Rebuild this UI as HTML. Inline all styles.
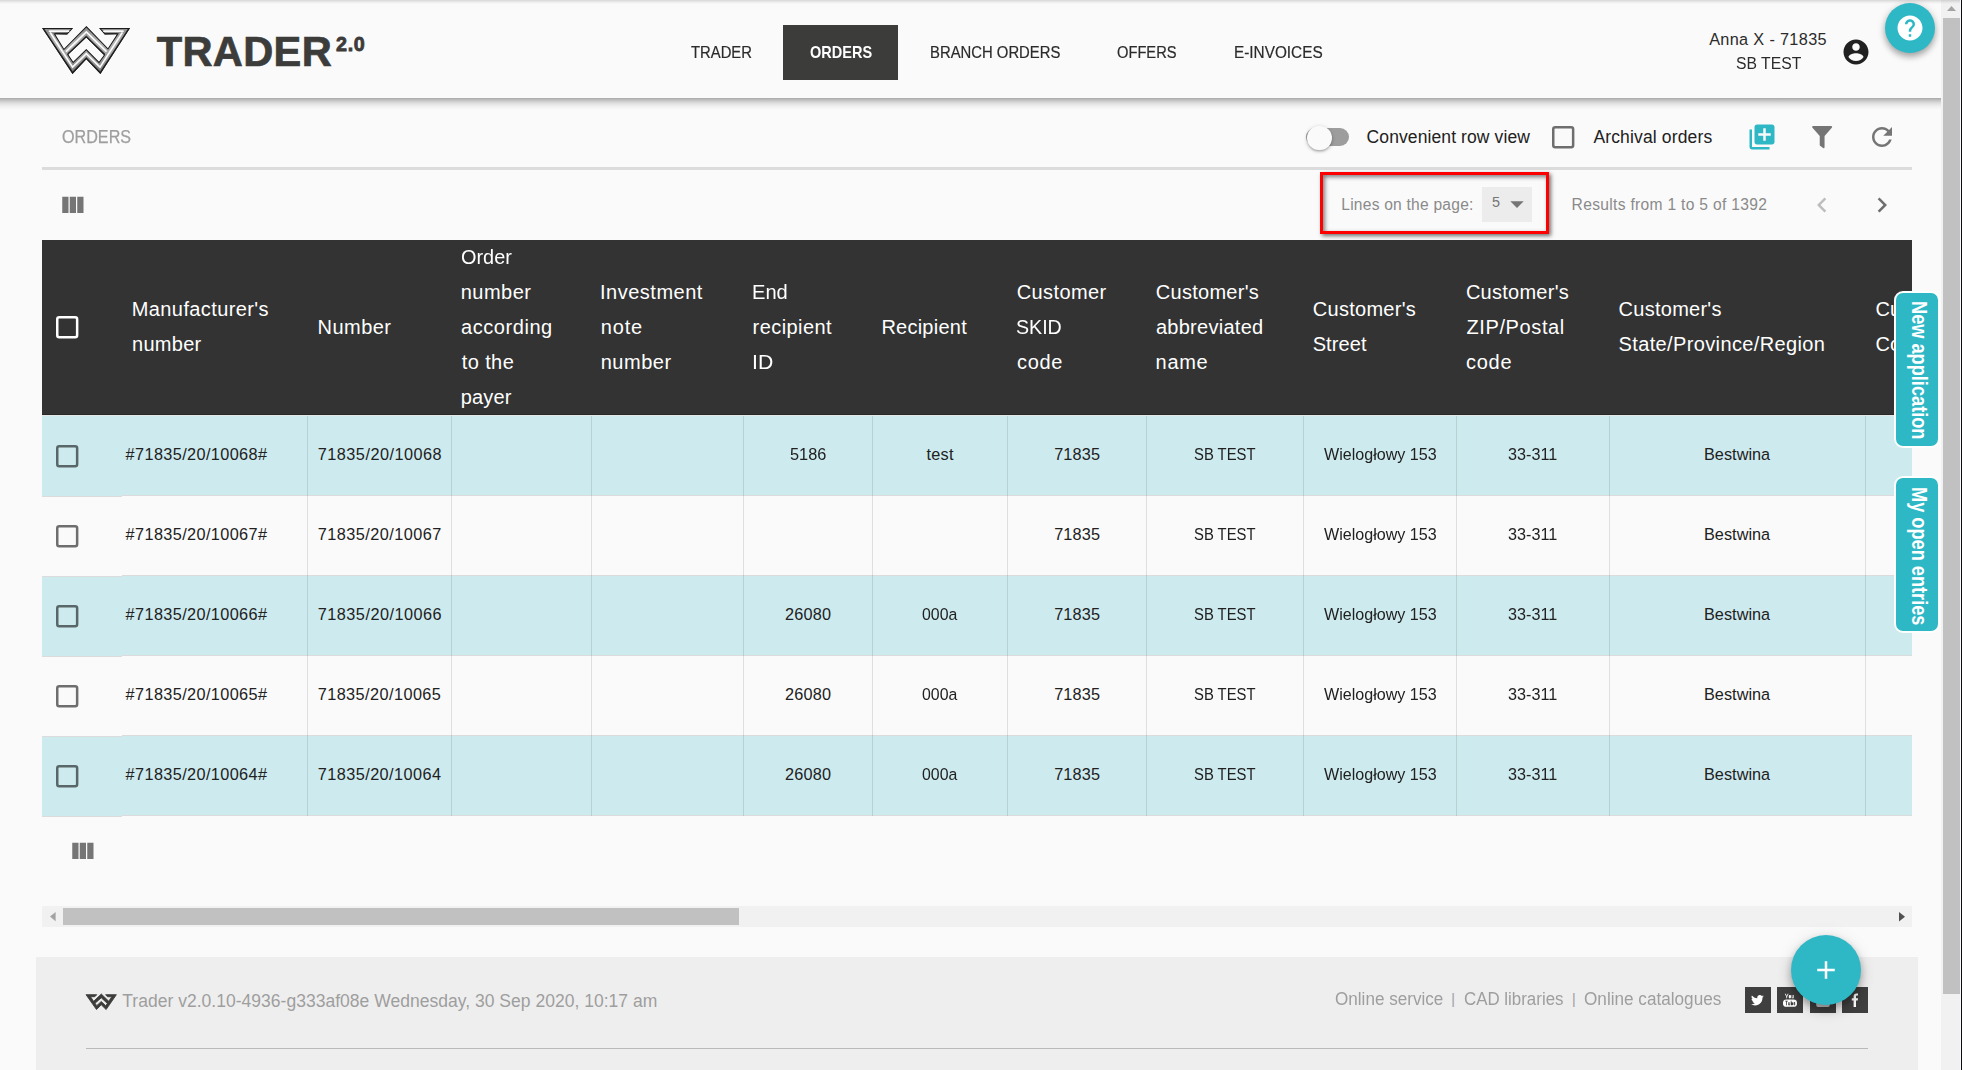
<!DOCTYPE html>
<html lang="en">
<head>
<meta charset="utf-8">
<title>Trader 2.0 - Orders</title>
<style>
html,body{margin:0;padding:0}
body{width:1962px;height:1070px;overflow:hidden;position:relative;background:#fafafa;font-family:"Liberation Sans",sans-serif;}
.a{position:absolute}
.t{position:absolute;white-space:nowrap;transform-origin:0 50%;font-family:"Liberation Sans",sans-serif}
svg{position:absolute;overflow:visible}
#hdr{left:0;top:0;width:1941px;height:98px;background:#fafafa}
#hsh{left:0;top:98px;width:1941px;height:12px;background:linear-gradient(rgba(0,0,0,.33),rgba(0,0,0,.23) 17%,rgba(0,0,0,.115) 42%,rgba(0,0,0,.04) 70%,rgba(0,0,0,0))}
#topshade{left:0;top:0;width:1960px;height:4px;background:linear-gradient(rgba(0,0,0,.14),rgba(0,0,0,.05) 55%,rgba(0,0,0,0))}
#navact{left:783px;top:25px;width:115px;height:55px;background:#3c3c3b}
.fab{border-radius:50%;background:#2eb8c6}
#help{left:1885px;top:3px;width:50px;height:50px;box-shadow:0 4px 6px rgba(0,0,0,.28),0 1px 10px rgba(0,0,0,.14)}
#add{left:1791px;top:935px;width:70px;height:70px;box-shadow:0 4px 7px rgba(0,0,0,.24),0 7px 14px rgba(0,0,0,.13),0 1px 18px rgba(0,0,0,.08)}
#vtrack{left:1941px;top:0;width:19px;height:1070px;background:#f1f1f1}
#vthumb{left:1943px;top:18px;width:17px;height:976px;background:#c1c1c1}
#vedge{left:1960.5px;top:0;width:1.5px;height:1070px;background:#0b0b14}
#divider{left:42px;top:167.3px;width:1870px;height:2.7px;background:#dcdcdc}
#redbox{left:1320px;top:172px;width:223px;height:56px;border:3px solid #ff0000;box-shadow:2px 2px 4px rgba(0,0,0,.55),inset 2px 2px 4px rgba(0,0,0,.5)}
#sel{left:1482px;top:187.2px;width:50px;height:34.4px;background:#ececec}
#track{left:1306px;top:128.2px;width:42.7px;height:17.6px;border-radius:9px;background:#9d9d9d}
#thumb{left:1307.3px;top:125.5px;width:24.3px;height:24.3px;border-radius:50%;background:#fafafa;box-shadow:0 1.5px 2px rgba(0,0,0,.2),0 1px 4px rgba(0,0,0,.2)}
.cb{width:17.6px;height:17.6px;border:2.4px solid #6b6b6b;border-radius:2.6px}
#thead{left:42px;top:240px;width:1870px;height:174.8px;background:#333333;box-sizing:border-box;border-bottom:1px solid #292929}
.row{left:42px;width:1870px;height:80.25px;box-sizing:border-box;border-bottom:1px solid #dcdcdc}
.srow{left:42px;width:79.9px;height:80.25px;box-sizing:border-box;border-bottom:1px solid #dcdcdc}
.teal{background:#cdeaee}
.white{background:#fafafa}
.vl{top:416px;width:1px;height:400px;background:rgba(0,0,0,.105)}
#htrack{left:42px;top:906px;width:1870px;height:21px;background:#f1f1f1}
#hthumb{left:63px;top:908px;width:676px;height:17px;background:#c1c1c1}
#footer{left:36px;top:957px;width:1882px;height:113px;background:#eeeeee}
#fhr{left:86px;top:1048px;width:1782px;height:1px;background:#b9b9b9}
.soc{top:987px;width:26px;height:26px;background:#3f3f3f}
.tab{left:1893.9px;width:42.3px;height:153.1px;background:#2eb8c6;border:2px solid #fdfefe;border-radius:9px}
.tabt{position:absolute;white-space:nowrap;color:#fff;font-weight:700;font-size:21.5px;line-height:21.5px;transform-origin:0 0;transform:rotate(90deg) scaleX(.846)}
#clip{left:42px;top:240px;width:1870px;height:580px;overflow:hidden}
</style>
</head>
<body>
<div class="a" id="hdr"></div>
<div class="a" id="hsh"></div>
<div class="a" id="navact"></div>

<!-- logo -->
<svg width="140" height="80" viewBox="0 0 140 80" style="left:0;top:0">
<defs>
<linearGradient id="mg" x1="0" y1="0" x2="0" y2="1">
<stop offset="0" stop-color="#868686"/><stop offset=".35" stop-color="#b4b4b4"/><stop offset=".7" stop-color="#9a9a9a"/><stop offset="1" stop-color="#787878"/>
</linearGradient>
<filter id="bl" x="-10%" y="-10%" width="120%" height="120%"><feGaussianBlur stdDeviation=".55"/></filter>
<clipPath id="wclip"><path d="M42.1 28.1H73.2L67.3 34.5 55.2 34.2 64 48.7 86.4 26.1 107.9 48.2 117 34.3 104.6 34.5 99 28.1H130.1L100.4 73.9 86.3 59.2 72.5 73.9ZM86.3 37.6L68.3 54.6 73.2 61.8 86.3 49 99 61.8 104 54.9Z" clip-rule="evenodd"/></clipPath>
</defs>
<g clip-path="url(#wclip)">
<path fill-rule="evenodd" fill="url(#mg)" stroke="#1c1c1c" stroke-width="2.0" stroke-linejoin="miter" d="M42.1 28.1H73.2L67.3 34.5 55.2 34.2 64 48.7 86.4 26.1 107.9 48.2 117 34.3 104.6 34.5 99 28.1H130.1L100.4 73.9 86.3 59.2 72.5 73.9ZM86.3 37.6L68.3 54.6 73.2 61.8 86.3 49 99 61.8 104 54.9Z"/>
<g fill="none" stroke="#1e1e1e" stroke-width="3" filter="url(#bl)" opacity=".8">
<path d="M42.1 28.1L72.5 73.9 86.3 59.2 100.4 73.9 130.1 28.1"/>
<path d="M68.3 54.6L86.3 37.6 104 54.9"/>
<path d="M55.2 34.2H67.3M104.6 34.5H117"/>
</g>
<g fill="none" stroke="#ffffff" stroke-width="1.7" stroke-linecap="round" filter="url(#bl)" opacity=".95">
<path d="M49.5 31.2H68.5"/>
<path d="M104 31.2H123"/>
<path d="M50.5 33L72.6 67.2 86.3 53.6 100 67.2 122 33"/>
<path d="M66.5 51.2L86.35 32 106 51.2"/>
</g>
</g>
</svg>

<!-- account icon -->
<svg width="30" height="30" viewBox="0 0 24 24" style="left:1841px;top:37px"><path fill="#212121" d="M12 2C6.48 2 2 6.48 2 12s4.48 10 10 10 10-4.48 10-10S17.52 2 12 2zm0 3c1.66 0 3 1.34 3 3s-1.34 3-3 3-3-1.34-3-3 1.34-3 3-3zm0 14.2c-2.5 0-4.71-1.28-6-3.22.03-1.99 4-3.08 6-3.08 1.99 0 5.97 1.09 6 3.08-1.29 1.94-3.5 3.22-6 3.22z"/></svg>

<!-- toolbar -->
<div class="a" id="track"></div>
<div class="a" id="thumb"></div>
<svg width="22.4" height="22.4" viewBox="0 0 22.4 22.4" style="left:1552px;top:125.8px"><rect x="1.25" y="1.25" width="19.9" height="19.9" rx="2" fill="none" stroke="rgba(0,0,0,.56)" stroke-width="2.5"/></svg>
<svg width="30" height="30" viewBox="0 0 24 24" style="left:1747px;top:122px"><path fill="#2eb8c6" d="M4 6H2v14c0 1.1.9 2 2 2h14v-2H4V6zm16-4H8c-1.1 0-2 .9-2 2v12c0 1.1.9 2 2 2h12c1.1 0 2-.9 2-2V4c0-1.1-.9-2-2-2zm-1 9h-4v4h-2v-4H9V9h4V5h2v4h4v2z"/></svg>
<svg width="20.3" height="22.6" viewBox="0 0 21 23" preserveAspectRatio="none" style="left:1811.9px;top:125.7px"><path fill="#757575" d="M1.2 0H19.8C20.8 0 21.2 1 20.5 1.8L13 10.2V21.6C13 22.5 12.2 22.9 11.5 22.4L8.4 20.2C8.1 20 8 19.7 8 19.3V10.2L.5 1.8C-.2 1 .2 0 1.2 0Z"/></svg>
<svg width="30" height="30" viewBox="0 0 24 24" style="left:1867px;top:122px"><path fill="#757575" d="M17.65 6.35C16.2 4.9 14.21 4 12 4c-4.42 0-7.99 3.58-7.99 8s3.57 8 7.99 8c3.73 0 6.84-2.55 7.73-6h-2.08c-.82 2.33-3.04 4-5.65 4-3.31 0-6-2.69-6-6s2.69-6 6-6c1.66 0 3.14.69 4.22 1.78L13 11h7V4l-2.35 2.35z"/></svg>
<div class="a" id="divider"></div>

<!-- pager -->
<svg width="25" height="19" viewBox="3 4.4 20 15.2" style="left:60.7px;top:195.9px"><path fill="#757575" d="M10 18h5V5h-5v13zm-6 0h5V5H4v13zM16 5v13h5V5h-5z"/></svg>
<div class="a" id="sel"></div>
<svg width="32" height="32" viewBox="0 0 24 24" style="left:1501px;top:188px"><path fill="#757575" d="M7 10l5 5 5-5z"/></svg>
<div class="a" id="redbox"></div>
<svg width="30" height="30" viewBox="0 0 24 24" style="left:1807px;top:189.9px"><path fill="#bdbdbd" d="M15.41 7.41L14 6l-6 6 6 6 1.41-1.41L10.83 12z"/></svg>
<svg width="30" height="30" viewBox="0 0 24 24" style="left:1867px;top:189.9px"><path fill="#6e6e6e" d="M10 6L8.59 7.41 13.17 12l-4.58 4.59L10 18l6-6z"/></svg>

<!-- table -->
<div class="a" id="thead"></div>
<div class="a row teal" style="top:416px;height:80px"></div>
<div class="a row white" style="top:496px;height:80px"></div>
<div class="a row teal" style="top:576px;height:80px"></div>
<div class="a row white" style="top:656px;height:80px"></div>
<div class="a row teal" style="top:736px;height:80px"></div>
<div class="a srow teal" style="top:416px;height:81px"></div>
<div class="a srow white" style="top:497px;height:80px"></div>
<div class="a srow teal" style="top:577px;height:80px"></div>
<div class="a srow white" style="top:657px;height:80px"></div>
<div class="a srow teal" style="top:737px;height:80px"></div>
<div class="a" style="left:42px;top:415px;width:1870px;height:1px;background:#e4e8e8"></div>
<div class="a vl" style="left:307px"></div>
<div class="a vl" style="left:451px"></div>
<div class="a vl" style="left:591px"></div>
<div class="a vl" style="left:743px"></div>
<div class="a vl" style="left:872px"></div>
<div class="a vl" style="left:1007px"></div>
<div class="a vl" style="left:1146px"></div>
<div class="a vl" style="left:1303px"></div>
<div class="a vl" style="left:1456px"></div>
<div class="a vl" style="left:1609px"></div>
<div class="a vl" style="left:1865px"></div>
<svg width="22.4" height="22.4" viewBox="0 0 22.4 22.4" style="left:55.8px;top:315.8px"><rect x="1.25" y="1.25" width="19.9" height="19.9" rx="2" fill="none" stroke="#fff" stroke-width="2.5"/></svg>
<svg width="22.4" height="22.4" viewBox="0 0 22.4 22.4" style="left:55.8px;top:444.7px"><rect x="1.25" y="1.25" width="19.9" height="19.9" rx="2" fill="none" stroke="rgba(0,0,0,.56)" stroke-width="2.5"/></svg>
<svg width="22.4" height="22.4" viewBox="0 0 22.4 22.4" style="left:55.8px;top:524.7px"><rect x="1.25" y="1.25" width="19.9" height="19.9" rx="2" fill="none" stroke="rgba(0,0,0,.56)" stroke-width="2.5"/></svg>
<svg width="22.4" height="22.4" viewBox="0 0 22.4 22.4" style="left:55.8px;top:604.7px"><rect x="1.25" y="1.25" width="19.9" height="19.9" rx="2" fill="none" stroke="rgba(0,0,0,.56)" stroke-width="2.5"/></svg>
<svg width="22.4" height="22.4" viewBox="0 0 22.4 22.4" style="left:55.8px;top:684.7px"><rect x="1.25" y="1.25" width="19.9" height="19.9" rx="2" fill="none" stroke="rgba(0,0,0,.56)" stroke-width="2.5"/></svg>
<svg width="22.4" height="22.4" viewBox="0 0 22.4 22.4" style="left:55.8px;top:764.7px"><rect x="1.25" y="1.25" width="19.9" height="19.9" rx="2" fill="none" stroke="rgba(0,0,0,.56)" stroke-width="2.5"/></svg>

<svg width="25" height="19" viewBox="3 4.4 20 15.2" style="left:70.6px;top:841.8px"><path fill="#757575" d="M10 18h5V5h-5v13zm-6 0h5V5H4v13zM16 5v13h5V5h-5z"/></svg>

<!-- horizontal scrollbar -->
<div class="a" id="htrack"></div>
<div class="a" id="hthumb"></div>
<svg width="5.6" height="9.2" viewBox="0 0 6 10" preserveAspectRatio="none" style="left:49.8px;top:912px"><path fill="#a3a3a3" d="M6 0V10L0 5Z"/></svg>
<svg width="6" height="9.6" viewBox="0 0 6 10" preserveAspectRatio="none" style="left:1899.1px;top:911.5px"><path fill="#505050" d="M0 0V10L6 5Z"/></svg>

<!-- footer -->
<div class="a" id="footer"></div>
<div class="a" id="fhr"></div>
<svg width="30.4" height="15.6" viewBox="42 26 88.2 48" preserveAspectRatio="none" style="left:86.4px;top:994.4px"><path fill-rule="evenodd" fill="#3c3c3b" stroke="#3c3c3b" stroke-width="2.6" stroke-linejoin="miter" d="M42.1 28.1H73.2L67.3 34.5 55.2 34.2 64 48.7 86.4 26.1 107.9 48.2 117 34.3 104.6 34.5 99 28.1H130.1L100.4 73.9 86.3 59.2 72.5 73.9ZM86.3 37.6L68.3 54.6 73.2 61.8 86.3 49 99 61.8 104 54.9Z"/></svg>
<div class="a soc" style="left:1745px"></div>
<div class="a soc" style="left:1777px"></div>
<div class="a soc" style="left:1810px"></div>
<div class="a soc" style="left:1842px"></div>
<svg width="12.8" height="10.7" viewBox="0 0 24 20" style="left:1751.3px;top:994.8px"><path fill="#fff" d="M24 2.4c-.9.4-1.8.7-2.8.8 1-.6 1.800-1.600 2.200-2.700-1 .6-2 1-3.100 1.200C19.400.7 18.100 0 16.600 0c-2.700 0-4.900 2.200-4.900 4.900 0 .4 0 .8.100 1.100C7.700 5.800 4.100 3.900 1.700.9c-.4.700-.7 1.600-.7 2.500 0 1.700.9 3.200 2.200 4.100-.8 0-1.600-.2-2.200-.6v.1c0 2.400 1.700 4.400 3.900 4.800-.4.100-.8.200-1.300.2-.3 0-.6 0-.9-.1.600 2 2.400 3.400 4.600 3.400-1.700 1.300-3.800 2.100-6.100 2.100-.4 0-.8 0-1.200-.1 2.200 1.400 4.800 2.200 7.500 2.200 9.100 0 14-7.500 14-14v-.6c1-.7 1.800-1.600 2.500-2.500z"/></svg>
<svg width="26" height="26" viewBox="0 0 26 26" style="left:1777px;top:987px"><rect x="6" y="12.400" width="14" height="7.400" rx="3.400" fill="#fff"/><path fill="#fff" d="M8.700 6.800l1 2.200 1-2.200h.9l-1.500 3v1.500h-.8V9.800l-1.500-3zM12.900 8c.7 0 1.100.4 1.100 1.100v1.200c0 .7-.4 1.100-1.100 1.100s-1.100-.4-1.100-1.100V9.100c0-.7.4-1.100 1.100-1.100zm1.800 0h.7v2.600h.6V8h.7v3.300h-2z"/><path fill="#3c3c3b" d="M8.200 13.700h2.600v.8h-.9v3.800h-.8v-3.800h-.9zM11.200 15.200h.7v2.300h.5v-2.300h.7v3.100h-1.900zM13.800 13.700h.7v1.500h.8c.4 0 .7.300.7.700v1.700c0 .4-.3.700-.7.700h-1.500zM16.600 15.900c0-.5.300-.8.800-.8s.8.300.8.800v.9h-.9v.5h.9v.4c0 .4-.3.600-.8.600s-.8-.3-.8-.8z"/></svg>
<svg width="26" height="26" viewBox="0 0 26 26" style="left:1810px;top:987px"><rect x="6.200" y="7" width="13.600" height="13" rx="2" fill="#c9c9c9"/></svg>
<svg width="26" height="26" viewBox="0 0 26 26" style="left:1842px;top:987px"><path fill="#fff" d="M11.600 20V13.600H9.800V11.300h1.800V9.600c0-1.900 1.100-3.100 3-3.100.8 0 1.400.1 1.400.1v2h-1c-.8 0-1 .4-1 1v1.700h2l-.3 2.300h-1.700V20z"/></svg>

<!-- FABs -->
<div class="a fab" id="add"></div>
<svg width="30" height="30" viewBox="0 0 24 24" style="left:1811px;top:955px"><path fill="#fff" d="M19 13h-6v6h-2v-6H5v-2h6V5h2v6h6v2z"/></svg>
<div class="a fab" id="help"></div>
<svg width="30" height="30" viewBox="0 0 24 24" style="left:1895px;top:13px"><path fill="#fff" d="M12 2C6.48 2 2 6.48 2 12s4.48 10 10 10 10-4.480 10-10S17.520 2 12 2zm1 17h-2v-2h2v2zm2.070-7.750l-.9.920C13.450 12.900 13 13.500 13 15h-2v-.5c0-1.100.450-2.100 1.170-2.830l1.240-1.260c.370-.360.590-.860.590-1.410 0-1.100-.9-2-2-2s-2 .9-2 2H8c0-2.210 1.790-4 4-4s4 1.790 4 4c0 .880-.360 1.680-.930 2.250z"/></svg>

<!-- texts -->
<header>
<span class="t" id="t0" style="left:156.7px;top:31.4px;font-size:41.60px;line-height:41.60px;color:#3c3c3b;font-weight:700;-webkit-text-stroke:.7px #3c3c3b;letter-spacing:.35px;">TRADER</span>
<span class="t" id="t1" style="left:336.1px;top:34.7px;font-size:19.70px;line-height:19.70px;color:#3c3c3b;font-weight:700;-webkit-text-stroke:.8px #3c3c3b;letter-spacing:.6px;">2.0</span>
<span class="t" id="t2" style="left:691.2px;top:44.2px;font-size:16.25px;line-height:16.25px;color:#2b2b2b;transform:scaleX(0.912);-webkit-text-stroke:.2px #2b2b2b;">TRADER</span>
<span class="t" id="t3" style="left:809.6px;top:44.2px;font-size:16.25px;line-height:16.25px;color:#ffffff;font-weight:700;transform:scaleX(0.893);">ORDERS</span>
<span class="t" id="t4" style="left:929.5px;top:44.2px;font-size:16.25px;line-height:16.25px;color:#2b2b2b;transform:scaleX(0.914);-webkit-text-stroke:.2px #2b2b2b;">BRANCH ORDERS</span>
<span class="t" id="t5" style="left:1117.1px;top:44.2px;font-size:16.25px;line-height:16.25px;color:#2b2b2b;transform:scaleX(0.903);-webkit-text-stroke:.2px #2b2b2b;">OFFERS</span>
<span class="t" id="t6" style="left:1233.8px;top:44.2px;font-size:16.25px;line-height:16.25px;color:#2b2b2b;transform:scaleX(0.944);-webkit-text-stroke:.2px #2b2b2b;">E-INVOICES</span>
<span class="t" id="t7" style="left:1709.2px;top:31.0px;font-size:16.25px;line-height:16.25px;color:#2b2b2b;letter-spacing:0.34px;">Anna X - 71835</span>
<span class="t" id="t8" style="left:1736.2px;top:55.1px;font-size:16.25px;line-height:16.25px;color:#2b2b2b;transform:scaleX(0.968);">SB TEST</span>
</header>
<section aria-label="Orders toolbar">
<span class="t" id="t9" style="left:62.4px;top:127.5px;font-size:18.30px;line-height:18.30px;color:#9e9e9e;transform:scaleX(0.883);-webkit-text-stroke:.25px #9e9e9e;">ORDERS</span>
<span class="t" id="t10" style="left:1366.6px;top:128.5px;font-size:17.50px;line-height:17.50px;color:#212121;letter-spacing:0.10px;">Convenient row view</span>
<span class="t" id="t11" style="left:1593.4px;top:128.5px;font-size:17.50px;line-height:17.50px;color:#212121;letter-spacing:0.15px;">Archival orders</span>
<span class="t" id="t12" style="left:1341.3px;top:196.6px;font-size:15.60px;line-height:15.60px;color:#8a8a8a;letter-spacing:0.22px;">Lines on the page:</span>
<span class="t" id="t13" style="left:1491.9px;top:195.4px;font-size:14.40px;line-height:14.40px;color:#757575;">5</span>
<span class="t" id="t14" style="left:1571.6px;top:196.6px;font-size:15.60px;line-height:15.60px;color:#8a8a8a;letter-spacing:0.31px;">Results from 1 to 5 of 1392</span>
</section>
<div role="table" aria-label="Orders">
<div role="row">
<span class="t" id="t15" style="left:131.8px;top:298.9px;font-size:20.00px;line-height:20.00px;color:#ffffff;letter-spacing:0.39px;">Manufacturer's</span>
<span class="t" id="t16" style="left:132.0px;top:333.9px;font-size:20.00px;line-height:20.00px;color:#ffffff;letter-spacing:0.28px;">number</span>
<span class="t" id="t17" style="left:317.5px;top:317.2px;font-size:20.00px;line-height:20.00px;color:#ffffff;letter-spacing:0.48px;">Number</span>
<span class="t" id="t18" style="left:460.5px;top:247.2px;font-size:20.00px;line-height:20.00px;color:#ffffff;transform:scaleX(0.995);">Order</span>
<span class="t" id="t19" style="left:460.7px;top:282.2px;font-size:20.00px;line-height:20.00px;color:#ffffff;letter-spacing:0.48px;">number</span>
<span class="t" id="t20" style="left:461.0px;top:317.2px;font-size:20.00px;line-height:20.00px;color:#ffffff;letter-spacing:0.56px;">according</span>
<span class="t" id="t21" style="left:461.7px;top:352.2px;font-size:20.00px;line-height:20.00px;color:#ffffff;letter-spacing:0.41px;">to the</span>
<span class="t" id="t22" style="left:460.7px;top:387.2px;font-size:20.00px;line-height:20.00px;color:#ffffff;letter-spacing:0.16px;">payer</span>
<span class="t" id="t23" style="left:600.0px;top:282.2px;font-size:20.00px;line-height:20.00px;color:#ffffff;letter-spacing:0.51px;">Investment</span>
<span class="t" id="t24" style="left:600.7px;top:317.2px;font-size:20.00px;line-height:20.00px;color:#ffffff;letter-spacing:0.87px;">note</span>
<span class="t" id="t25" style="left:600.7px;top:352.2px;font-size:20.00px;line-height:20.00px;color:#ffffff;letter-spacing:0.52px;">number</span>
<span class="t" id="t26" style="left:751.8px;top:282.2px;font-size:20.00px;line-height:20.00px;color:#ffffff;transform:scaleX(1.006);">End</span>
<span class="t" id="t27" style="left:752.6px;top:317.2px;font-size:20.00px;line-height:20.00px;color:#ffffff;letter-spacing:0.43px;">recipient</span>
<span class="t" id="t28" style="left:751.5px;top:352.2px;font-size:20.00px;line-height:20.00px;color:#ffffff;transform:scaleX(1.062);">ID</span>
<span class="t" id="t29" style="left:881.4px;top:317.2px;font-size:20.00px;line-height:20.00px;color:#ffffff;letter-spacing:0.24px;">Recipient</span>
<span class="t" id="t30" style="left:1016.8px;top:282.2px;font-size:20.00px;line-height:20.00px;color:#ffffff;letter-spacing:0.37px;">Customer</span>
<span class="t" id="t31" style="left:1016.2px;top:317.2px;font-size:20.00px;line-height:20.00px;color:#ffffff;transform:scaleX(0.981);">SKID</span>
<span class="t" id="t32" style="left:1017.0px;top:352.2px;font-size:20.00px;line-height:20.00px;color:#ffffff;letter-spacing:0.64px;">code</span>
<span class="t" id="t33" style="left:1155.8px;top:282.2px;font-size:20.00px;line-height:20.00px;color:#ffffff;letter-spacing:0.27px;">Customer's</span>
<span class="t" id="t34" style="left:1155.9px;top:317.2px;font-size:20.00px;line-height:20.00px;color:#ffffff;letter-spacing:0.28px;">abbreviated</span>
<span class="t" id="t35" style="left:1155.6px;top:352.2px;font-size:20.00px;line-height:20.00px;color:#ffffff;letter-spacing:0.66px;">name</span>
<span class="t" id="t36" style="left:1312.8px;top:298.9px;font-size:20.00px;line-height:20.00px;color:#ffffff;letter-spacing:0.27px;">Customer's</span>
<span class="t" id="t37" style="left:1312.7px;top:333.9px;font-size:20.00px;line-height:20.00px;color:#ffffff;letter-spacing:0.08px;">Street</span>
<span class="t" id="t38" style="left:1465.9px;top:282.2px;font-size:20.00px;line-height:20.00px;color:#ffffff;letter-spacing:0.26px;">Customer's</span>
<span class="t" id="t39" style="left:1466.4px;top:317.2px;font-size:20.00px;line-height:20.00px;color:#ffffff;letter-spacing:0.63px;">ZIP/Postal</span>
<span class="t" id="t40" style="left:1466.0px;top:352.2px;font-size:20.00px;line-height:20.00px;color:#ffffff;letter-spacing:0.75px;">code</span>
<span class="t" id="t41" style="left:1618.6px;top:298.9px;font-size:20.00px;line-height:20.00px;color:#ffffff;letter-spacing:0.26px;">Customer's</span>
<span class="t" id="t42" style="left:1618.5px;top:333.9px;font-size:20.00px;line-height:20.00px;color:#ffffff;letter-spacing:0.37px;">State/Province/Region</span>
<span class="t" id="t43" style="left:1875.6px;top:298.9px;font-size:20.00px;line-height:20.00px;color:#ffffff;clip-path:inset(0 calc(100% - 37px) 0 0);">Customer's</span>
<span class="t" id="t44" style="left:1875.6px;top:333.9px;font-size:20.00px;line-height:20.00px;color:#ffffff;clip-path:inset(0 calc(100% - 37px) 0 0);">Country</span>
</div>
<div role="row">
<span class="t" id="t45" style="left:125.6px;top:445.7px;font-size:16.25px;line-height:16.25px;color:#212121;letter-spacing:0.39px;">#71835/20/10068#</span>
<span class="t" id="t46" style="left:317.8px;top:446.0px;font-size:16.25px;line-height:16.25px;color:#212121;letter-spacing:0.48px;">71835/20/10068</span>
<span class="t" id="t47" style="left:790.1px;top:446.0px;font-size:16.25px;line-height:16.25px;color:#212121;transform:scaleX(1.005);">5186</span>
<span class="t" id="t48" style="left:926.4px;top:446.0px;font-size:16.25px;line-height:16.25px;color:#212121;letter-spacing:0.30px;">test</span>
<span class="t" id="t49" style="left:1054.2px;top:446.0px;font-size:16.25px;line-height:16.25px;color:#212121;letter-spacing:0.15px;">71835</span>
<span class="t" id="t50" style="left:1193.7px;top:446.0px;font-size:16.25px;line-height:16.25px;color:#212121;transform:scaleX(0.912);">SB TEST</span>
<span class="t" id="t51" style="left:1323.8px;top:446.0px;font-size:16.25px;line-height:16.25px;color:#212121;transform:scaleX(0.990);">Wielogłowy 153</span>
<span class="t" id="t52" style="left:1508.2px;top:446.0px;font-size:16.25px;line-height:16.25px;color:#212121;transform:scaleX(0.997);">33-311</span>
<span class="t" id="t53" style="left:1704.0px;top:446.0px;font-size:16.25px;line-height:16.25px;color:#212121;letter-spacing:0.03px;">Bestwina</span>
</div>
<div role="row">
<span class="t" id="t54" style="left:125.6px;top:525.7px;font-size:16.25px;line-height:16.25px;color:#212121;letter-spacing:0.39px;">#71835/20/10067#</span>
<span class="t" id="t55" style="left:317.7px;top:526.0px;font-size:16.25px;line-height:16.25px;color:#212121;letter-spacing:0.48px;">71835/20/10067</span>
<span class="t" id="t56" style="left:1054.2px;top:526.0px;font-size:16.25px;line-height:16.25px;color:#212121;letter-spacing:0.15px;">71835</span>
<span class="t" id="t57" style="left:1193.7px;top:526.0px;font-size:16.25px;line-height:16.25px;color:#212121;transform:scaleX(0.912);">SB TEST</span>
<span class="t" id="t58" style="left:1323.8px;top:526.0px;font-size:16.25px;line-height:16.25px;color:#212121;transform:scaleX(0.990);">Wielogłowy 153</span>
<span class="t" id="t59" style="left:1508.2px;top:526.0px;font-size:16.25px;line-height:16.25px;color:#212121;transform:scaleX(0.997);">33-311</span>
<span class="t" id="t60" style="left:1704.0px;top:526.0px;font-size:16.25px;line-height:16.25px;color:#212121;letter-spacing:0.03px;">Bestwina</span>
</div>
<div role="row">
<span class="t" id="t61" style="left:125.6px;top:605.7px;font-size:16.25px;line-height:16.25px;color:#212121;letter-spacing:0.39px;">#71835/20/10066#</span>
<span class="t" id="t62" style="left:317.8px;top:606.0px;font-size:16.25px;line-height:16.25px;color:#212121;letter-spacing:0.48px;">71835/20/10066</span>
<span class="t" id="t63" style="left:785.0px;top:606.0px;font-size:16.25px;line-height:16.25px;color:#212121;letter-spacing:0.23px;">26080</span>
<span class="t" id="t64" style="left:922.2px;top:606.0px;font-size:16.25px;line-height:16.25px;color:#212121;transform:scaleX(0.976);">000a</span>
<span class="t" id="t65" style="left:1054.2px;top:606.0px;font-size:16.25px;line-height:16.25px;color:#212121;letter-spacing:0.15px;">71835</span>
<span class="t" id="t66" style="left:1193.7px;top:606.0px;font-size:16.25px;line-height:16.25px;color:#212121;transform:scaleX(0.912);">SB TEST</span>
<span class="t" id="t67" style="left:1323.8px;top:606.0px;font-size:16.25px;line-height:16.25px;color:#212121;transform:scaleX(0.990);">Wielogłowy 153</span>
<span class="t" id="t68" style="left:1508.2px;top:606.0px;font-size:16.25px;line-height:16.25px;color:#212121;transform:scaleX(0.997);">33-311</span>
<span class="t" id="t69" style="left:1704.0px;top:606.0px;font-size:16.25px;line-height:16.25px;color:#212121;letter-spacing:0.03px;">Bestwina</span>
</div>
<div role="row">
<span class="t" id="t70" style="left:125.6px;top:685.7px;font-size:16.25px;line-height:16.25px;color:#212121;letter-spacing:0.39px;">#71835/20/10065#</span>
<span class="t" id="t71" style="left:317.7px;top:686.0px;font-size:16.25px;line-height:16.25px;color:#212121;letter-spacing:0.44px;">71835/20/10065</span>
<span class="t" id="t72" style="left:785.0px;top:686.0px;font-size:16.25px;line-height:16.25px;color:#212121;letter-spacing:0.23px;">26080</span>
<span class="t" id="t73" style="left:922.2px;top:686.0px;font-size:16.25px;line-height:16.25px;color:#212121;transform:scaleX(0.976);">000a</span>
<span class="t" id="t74" style="left:1054.2px;top:686.0px;font-size:16.25px;line-height:16.25px;color:#212121;letter-spacing:0.15px;">71835</span>
<span class="t" id="t75" style="left:1193.7px;top:686.0px;font-size:16.25px;line-height:16.25px;color:#212121;transform:scaleX(0.912);">SB TEST</span>
<span class="t" id="t76" style="left:1323.8px;top:686.0px;font-size:16.25px;line-height:16.25px;color:#212121;transform:scaleX(0.990);">Wielogłowy 153</span>
<span class="t" id="t77" style="left:1508.2px;top:686.0px;font-size:16.25px;line-height:16.25px;color:#212121;transform:scaleX(0.997);">33-311</span>
<span class="t" id="t78" style="left:1704.0px;top:686.0px;font-size:16.25px;line-height:16.25px;color:#212121;letter-spacing:0.03px;">Bestwina</span>
</div>
<div role="row">
<span class="t" id="t79" style="left:125.6px;top:765.7px;font-size:16.25px;line-height:16.25px;color:#212121;letter-spacing:0.39px;">#71835/20/10064#</span>
<span class="t" id="t80" style="left:317.8px;top:766.0px;font-size:16.25px;line-height:16.25px;color:#212121;letter-spacing:0.44px;">71835/20/10064</span>
<span class="t" id="t81" style="left:785.0px;top:766.0px;font-size:16.25px;line-height:16.25px;color:#212121;letter-spacing:0.23px;">26080</span>
<span class="t" id="t82" style="left:922.2px;top:766.0px;font-size:16.25px;line-height:16.25px;color:#212121;transform:scaleX(0.976);">000a</span>
<span class="t" id="t83" style="left:1054.2px;top:766.0px;font-size:16.25px;line-height:16.25px;color:#212121;letter-spacing:0.15px;">71835</span>
<span class="t" id="t84" style="left:1193.7px;top:766.0px;font-size:16.25px;line-height:16.25px;color:#212121;transform:scaleX(0.912);">SB TEST</span>
<span class="t" id="t85" style="left:1323.8px;top:766.0px;font-size:16.25px;line-height:16.25px;color:#212121;transform:scaleX(0.990);">Wielogłowy 153</span>
<span class="t" id="t86" style="left:1508.2px;top:766.0px;font-size:16.25px;line-height:16.25px;color:#212121;transform:scaleX(0.997);">33-311</span>
<span class="t" id="t87" style="left:1704.0px;top:766.0px;font-size:16.25px;line-height:16.25px;color:#212121;letter-spacing:0.03px;">Bestwina</span>
</div>
</div>
<footer>
<span class="t" id="t88" style="left:122.3px;top:993.4px;font-size:17.50px;line-height:17.50px;color:#9e9e9e;letter-spacing:0.02px;">Trader v2.0.10-4936-g333af08e Wednesday, 30 Sep 2020, 10:17 am</span>
<span class="t" id="t89" style="left:1334.6px;top:990.8px;font-size:17.50px;line-height:17.50px;color:#9e9e9e;transform:scaleX(0.977);">Online service</span>
<span class="t" id="t90" style="left:1451.3px;top:991.9px;font-size:14.20px;line-height:14.20px;color:#9e9e9e;">|</span>
<span class="t" id="t91" style="left:1463.5px;top:990.8px;font-size:17.50px;line-height:17.50px;color:#9e9e9e;transform:scaleX(0.965);">CAD libraries</span>
<span class="t" id="t92" style="left:1571.9px;top:991.9px;font-size:14.20px;line-height:14.20px;color:#9e9e9e;">|</span>
<span class="t" id="t93" style="left:1583.6px;top:990.8px;font-size:17.50px;line-height:17.50px;color:#9e9e9e;transform:scaleX(0.980);">Online catalogues</span>
</footer>

<!-- side tabs -->
<div class="a tab" style="top:291px"></div>
<div class="a tab" style="top:475.9px"></div>
<span class="tabt" style="left:1928.6px;top:301.4px">New application</span>
<span class="tabt" style="left:1928.6px;top:486.5px">My open entries</span>

<!-- browser scrollbar -->
<div class="a" id="vtrack"></div>
<div class="a" id="vthumb"></div>
<svg width="9" height="5" viewBox="0 0 9 5" style="left:1947px;top:6px"><path fill="#a3a3a3" d="M0 5H9L4.500 0Z"/></svg>
<div class="a" id="topshade"></div>
<div class="a" id="vedge"></div>
</body>
</html>
